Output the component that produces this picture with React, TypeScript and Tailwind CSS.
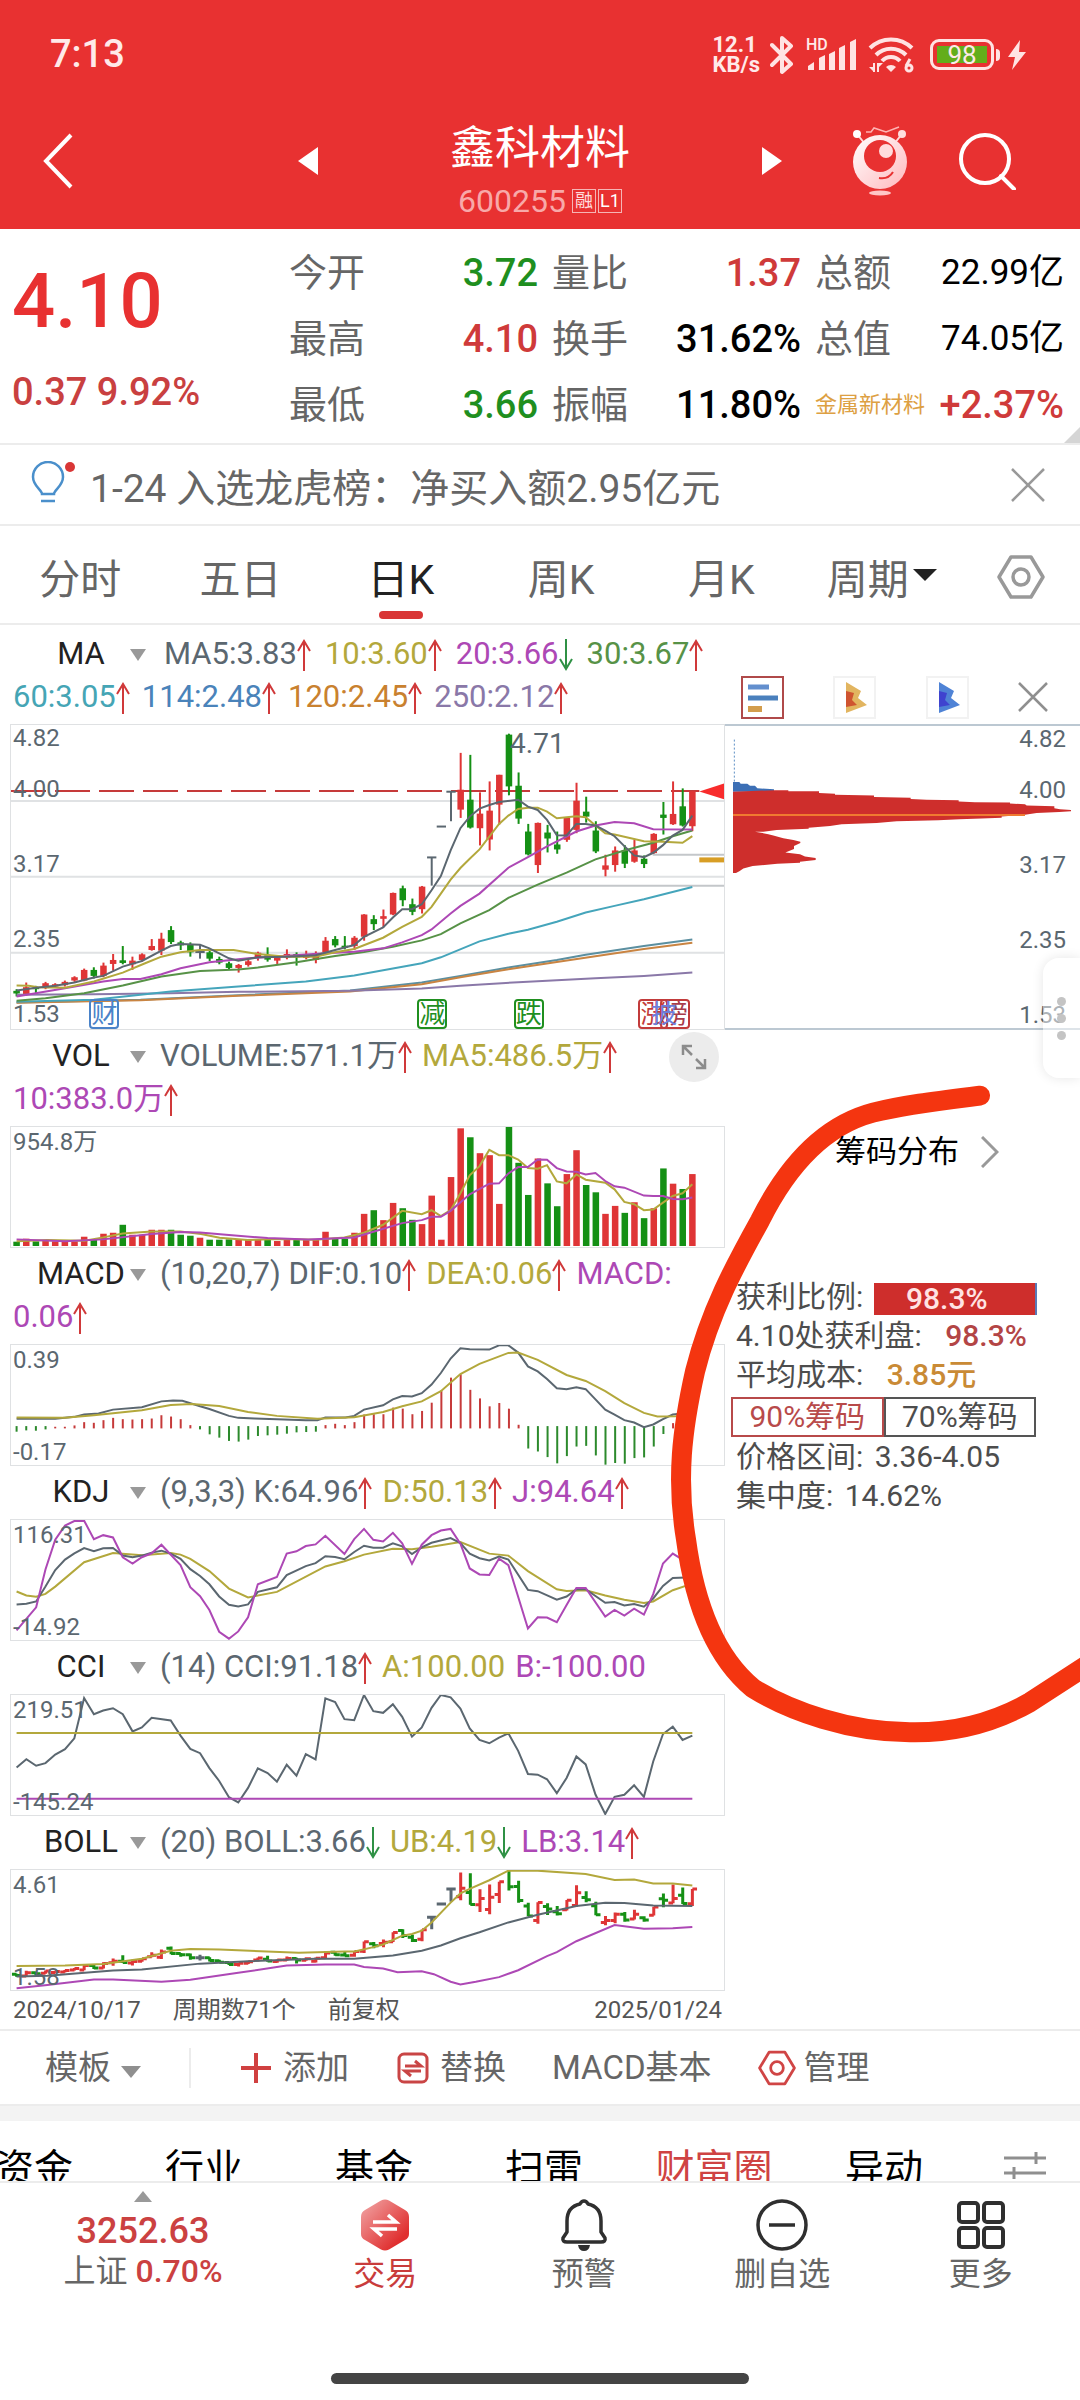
import { useState } from 'react'
import type { ReactNode } from 'react'

const RED = '#df3536'
const GREEN = '#159015'
const GRAY = '#5b6770'
const YELLOW = '#b3a83c'
const PURPLE = '#ad48b5'

// x of the n-th day on the chart grid, 71 days in all
const dayX = (i: number) => 34 + i * 20.73

// [kind, body top, body bottom, high, low]
type Candle = [string, number, number, number, number]

const candles: Candle[] = [
  ['g', 873, 881, 868, 890], ['r', 862, 884, 848, 888], ['g', 862, 868, 858, 880], ['r', 850, 865, 846, 868],
  ['r', 853, 860, 850, 863], ['r', 846, 856, 842, 860], ['r', 832, 842, 829, 846], ['r', 810, 842, 806, 844],
  ['g', 810, 828, 802, 836], ['r', 797, 828, 788, 832], ['r', 780, 792, 762, 812], ['g', 781, 789, 738, 793],
  ['r', 782, 793, 770, 810], ['r', 763, 780, 760, 785], ['r', 738, 750, 717, 752], ['r', 716, 752, 698, 765],
  ['g', 690, 726, 678, 732], ['g', 727, 736, 722, 750], ['g', 735, 757, 727, 770], ['n', 756, 756, 735, 776],
  ['g', 757, 776, 752, 783], ['g', 777, 788, 770, 793], ['g', 790, 804, 785, 808], ['r', 795, 804, 792, 818],
  ['r', 784, 795, 780, 800], ['r', 758, 772, 755, 782], ['g', 766, 779, 742, 785], ['r', 772, 782, 768, 792],
  ['r', 762, 772, 748, 778], ['g', 762, 772, 757, 797], ['r', 764, 774, 752, 778], ['r', 760, 780, 754, 790],
  ['r', 722, 756, 711, 762], ['g', 717, 736, 708, 742], ['g', 737, 743, 708, 748], ['r', 713, 738, 708, 750],
  ['r', 643, 710, 642, 722], ['g', 657, 672, 645, 690], ['r', 648, 656, 628, 682], ['r', 578, 643, 577, 645],
  ['g', 564, 600, 556, 618], ['g', 612, 635, 595, 645], ['r', 559, 627, 557, 640], ['n', 471, 471, 471, 556],
  ['n', 378, 378, 378, 378], ['n', 273, 273, 273, 362], ['r', 267, 327, 156, 352], ['g', 297, 381, 162, 384],
  ['r', 339, 383, 275, 435], ['r', 330, 417, 242, 450], ['r', 222, 312, 222, 372], ['g', 101, 257, 98, 284],
  ['g', 255, 354, 215, 370], ['g', 393, 462, 370, 465], ['r', 367, 494, 366, 518], ['g', 396, 414, 373, 456],
  ['g', 432, 447, 393, 460], ['r', 352, 418, 350, 424], ['r', 300, 388, 246, 398], ['g', 333, 348, 288, 366],
  ['g', 390, 453, 362, 458], ['r', 495, 508, 463, 528], ['r', 450, 494, 438, 514], ['g', 450, 490, 434, 503],
  ['r', 450, 484, 418, 487], ['g', 475, 491, 465, 503], ['r', 400, 458, 398, 460], ['g', 342, 352, 304, 402],
  ['r', 340, 371, 242, 373], ['g', 317, 375, 263, 378], ['r', 272, 377, 272, 392],
]

const volumeTops = [
  633, 624, 632, 630, 632, 632, 632, 618, 627, 609, 606, 582, 612, 612, 597, 597, 597, 612, 615, 621, 627, 627, 626,
  627, 628, 627, 625, 631, 627, 628, 628, 628, 603, 622, 624, 606, 549, 538, 568, 516, 532, 567, 580, 494, 627, 438,
  291, 318, 366, 372, 519, 287, 395, 492, 382, 457, 526, 429, 357, 462, 484, 549, 525, 546, 514, 562, 532, 412, 458,
  474, 429,
]

const macdEnds = [
  360, 356, 357, 353, 345, 345, 341, 331, 333, 325, 318, 322, 323, 322, 320, 310, 314, 322, 340, 353, 368, 378, 388,
  390, 384, 373, 371, 369, 366, 362, 361, 360, 340, 336, 340, 331, 308, 307, 307, 287, 290, 307, 297, 272, 235, 196,
  186, 233, 259, 283, 273, 290, 339, 411, 420, 437, 456, 434, 405, 403, 432, 460, 455, 457, 440, 438, 405, 367, 334,
  334, 325,
]

const priceLines = [
  { color: '#5b8fa0', points: '34,908 300,900 510,886 750,872 904,848 987,828 1090,803 1194,780 1256,764 1381,738 1485,718' },
  { color: '#c98442', points: '34,909 300,901 510,888 750,875 904,853 987,832 1090,808 1194,786 1381,747 1485,728' },
  { color: '#8a78a8', points: '34,885 200,883 365,880 510,876 750,873 904,866 987,858 1111,847 1277,835 1381,828 1485,818' },
  { color: '#45a5bb', points: '34,906 200,900 365,875 510,860 655,845 759,827 842,806 904,790 945,772 1028,724 1090,701 1132,689 1194,665 1256,637 1318,617 1381,597 1485,560' },
  { color: '#579247', points: '34,903 96,895 179,880 262,857 345,830 428,813 510,809 552,803 635,787 718,768 780,756 842,740 904,721 945,702 987,670 1049,630 1090,593 1153,553 1215,517 1277,477 1339,450 1401,427 1443,407 1485,390' },
  { color: PURPLE, points: '34,890 138,865 220,845 262,837 300,837 345,823 386,805 448,787 531,775 614,767 697,760 759,755 821,745 862,727 904,705 925,688 966,640 987,617 1028,580 1090,502 1132,470 1173,438 1236,393 1277,375 1318,364 1360,368 1401,386 1485,387' },
  { color: YELLOW, points: '34,857 60,858 80,862 138,864 200,845 262,818 310,790 345,770 386,757 428,750 500,750 552,762 614,770 676,770 718,757 759,747 821,713 862,680 904,650 925,620 945,580 966,538 987,503 1007,475 1028,447 1070,370 1090,345 1111,325 1132,321 1153,321 1173,333 1194,353 1236,347 1256,350 1277,375 1298,398 1318,402 1381,422 1422,424 1464,427 1485,407' },
  { color: GRAY, points: '34,872 76,864 117,858 158,848 200,833 220,828 262,800 303,783 345,752 365,738 386,732 428,734 448,745 490,775 510,782 552,772 614,770 676,766 718,750 759,735 780,710 821,682 842,652 862,627 883,627 904,612 925,570 945,527 966,450 987,383 1007,348 1028,324 1049,313 1070,304 1111,297 1132,318 1153,328 1173,358 1194,404 1215,405 1236,370 1256,370 1277,375 1298,390 1318,407 1339,437 1360,465 1381,470 1401,457 1422,434 1443,405 1464,388 1485,345' },
]

const volumeLines = [
  { color: YELLOW, points: '34,632 100,628 180,630 220,620 262,608 324,602 386,602 430,610 470,621 530,628 600,625 676,627 738,620 780,606 821,582 862,540 904,550 925,538 945,556 966,538 987,487 1007,433 1028,405 1049,356 1070,372 1090,372 1111,385 1132,411 1153,413 1173,402 1194,451 1215,457 1236,430 1256,446 1298,455 1318,475 1339,513 1360,520 1381,538 1401,536 1422,515 1443,495 1464,487 1485,460' },
  { color: PURPLE, points: '34,626 138,632 220,626 324,610 386,604 428,605 490,613 573,622 660,626 759,620 800,603 862,577 904,568 925,558 945,558 966,540 1007,490 1049,458 1070,457 1090,427 1111,408 1132,408 1153,385 1173,386 1194,411 1215,421 1236,422 1256,430 1277,426 1298,450 1318,466 1339,470 1381,494 1401,495 1422,495 1443,504 1464,505 1485,500' },
]

const macdLines = [
  { color: GRAY, points: '34,321 117,321 158,315 179,308 210,305 241,293 303,286 345,268 370,265 390,266 428,283 448,291 490,312 510,318 545,320 593,322 655,325 680,325 697,317 740,317 759,312 780,293 821,280 842,262 862,252 883,253 904,243 925,217 945,182 966,138 987,107 1007,110 1049,111 1070,98 1090,98 1111,120 1132,162 1153,177 1173,200 1194,228 1215,231 1236,225 1256,231 1277,262 1298,293 1318,308 1339,325 1360,332 1381,346 1401,338 1422,322 1443,308 1464,305 1485,270' },
  { color: YELLOW, points: '34,317 138,318 200,310 303,295 365,279 410,276 469,282 531,300 593,312 680,321 759,316 821,300 862,283 904,268 945,237 987,185 1028,154 1090,121 1111,120 1153,142 1215,188 1256,206 1298,237 1339,273 1381,303 1410,314 1450,313 1485,300' },
]

const kdjLines = [
  { color: YELLOW, points: '34,842 55,854 76,858 96,849 117,827 179,753 241,725 303,732 365,725 386,730 407,743 448,780 490,833 531,860 593,843 697,766 738,750 780,730 842,712 883,714 925,706 987,692 1049,727 1090,733 1132,780 1194,835 1215,840 1256,838 1298,854 1339,867 1381,877 1401,872 1443,838 1485,818' },
  { color: GRAY, points: '34,881 55,879 76,872 96,827 117,777 138,745 158,726 179,710 200,720 220,711 241,710 262,733 283,738 303,733 324,724 345,718 365,727 386,743 407,774 428,795 448,820 469,857 490,882 510,887 531,881 552,843 593,829 614,792 655,765 676,756 697,735 718,737 738,744 759,722 780,703 800,709 821,709 842,696 862,705 883,728 904,708 925,694 966,680 987,695 1007,727 1028,741 1049,748 1070,736 1090,745 1132,837 1153,841 1194,867 1215,857 1236,835 1256,835 1298,876 1318,874 1339,884 1360,880 1381,888 1401,863 1422,825 1443,801 1485,799' },
  { color: PURPLE, points: '34,960 76,890 96,775 117,685 138,642 158,628 179,627 200,683 220,671 241,678 262,738 283,757 303,738 324,726 345,700 386,762 407,829 428,856 448,898 469,964 490,985 510,963 531,920 552,820 593,798 614,727 635,720 655,704 676,699 697,673 738,728 759,683 780,652 800,685 821,690 842,664 862,696 883,758 904,700 925,671 945,657 966,652 987,697 1007,772 1028,790 1049,792 1070,742 1090,762 1132,954 1153,920 1173,921 1194,935 1215,883 1236,831 1256,831 1298,918 1318,898 1339,915 1360,894 1381,912 1401,850 1422,757 1443,727 1464,745 1485,760' },
]

const cciLines = [
  { color: GRAY, points: '34,413 55,388 76,408 96,400 117,374 138,358 158,325 179,203 200,252 220,241 241,234 262,252 283,304 303,292 324,263 365,271 386,317 407,357 428,370 448,415 469,454 490,503 510,519 531,475 552,416 573,430 593,456 614,405 635,438 655,373 676,389 697,204 718,215 738,267 759,270 780,194 800,243 821,248 842,222 862,260 883,320 904,292 925,233 945,194 966,201 987,235 1007,295 1028,330 1049,340 1070,323 1090,310 1111,363 1132,433 1153,435 1173,449 1194,491 1215,445 1236,380 1256,404 1277,495 1298,554 1318,502 1339,496 1360,467 1381,502 1401,395 1422,312 1443,290 1464,330 1485,317' },
  { color: YELLOW, points: '34,309 1485,309' },
  { color: PURPLE, points: '34,508 1485,508' },
]

const bollLines = [
  { color: YELLOW, points: '34,1012 138,1011 220,1006 303,990 365,966 407,961 470,962 640,972 738,968 760,968 800,955 821,947 862,920 883,915 904,905 925,880 966,820 987,792 1007,778 1049,752 1090,723 1153,723 1256,733 1318,751 1360,750 1401,762 1443,762 1485,768' },
  { color: GRAY, points: '34,1044 100,1042 241,1026 303,1023 428,1005 531,998 676,990 759,990 842,980 904,966 945,950 987,928 1028,910 1090,880 1153,857 1236,830 1298,820 1339,821 1401,829 1485,830' },
  { color: PURPLE, points: '34,1080 100,1070 200,1053 241,1053 345,1060 407,1054 510,1033 614,1011 697,1008 759,1008 780,1015 821,1020 852,1031 904,1028 930,1037 966,1060 987,1068 1020,1060 1070,1046 1111,1025 1173,982 1194,970 1236,937 1318,888 1381,899 1443,898 1485,894' },
]

function kindColor(kind: string) {
  if (kind === 'r') return RED
  if (kind === 'g') return GREEN
  return GRAY
}

function Triangle({ className, up }: { className: string; up?: boolean }) {
  return (
    <svg viewBox="0 0 20 12" preserveAspectRatio="none" className={className} aria-hidden="true">
      <path d={up ? 'M10 0 20 12H0Z' : 'M0 0h20L10 12Z'} fill="currentColor" />
    </svg>
  )
}

function Arrow({ dir }: { dir: 'up' | 'down' }) {
  return (
    <svg viewBox="0 0 14 32" className={dir === 'up' ? 'w-[14px] h-8' : 'w-[14px] h-8 rotate-180'} aria-hidden="true">
      <path d="M7 32V2M1 12 7 2l6 10" fill="none" stroke={dir === 'up' ? '#d0393a' : '#2f9145'} strokeWidth="2" />
    </svg>
  )
}

function HexIcon({ className }: { className: string }) {
  return (
    <svg viewBox="0 0 48 44" className={className} fill="none" stroke="currentColor" strokeWidth="3.500" aria-hidden="true">
      <path d="M14 2h20l12 20-12 20H14L2 22Z" strokeLinejoin="round" />
      <circle cx="24" cy="22" r="8" />
    </svg>
  )
}

function Lines({ lines }: { lines: { color: string; points: string }[] }) {
  return (
    <>
      {lines.map((line, i) => (
        <polyline
          key={i}
          points={line.points}
          fill="none"
          stroke={line.color}
          strokeWidth="2"
          vectorEffect="non-scaling-stroke"
        />
      ))}
    </>
  )
}

function StatusBar() {
  return (
    <div className="flex h-[109px] items-center justify-between pl-[50px] pr-[54px]">
      <span className="text-[38px] font-medium">7:13</span>
      <div className="flex items-center">
        <div className="text-[22px] leading-[20px] font-bold">
          <div>12.1</div>
          <div>KB/s</div>
        </div>
        <svg viewBox="0 0 24 40" className="ml-[10px] w-6 h-10" fill="none" stroke="#ffe3e3" strokeWidth="4" aria-label="蓝牙">
          <path d="M2 10 21 29 12 37V3L21 11 2 30" strokeLinejoin="round" strokeLinecap="round" />
        </svg>
        <div className="relative ml-3 h-8 w-[50px]">
          <span className="absolute left-0 -top-1 text-base leading-5 font-medium">HD</span>
          <svg viewBox="0 0 50 32" className="h-8 w-[50px]" fill="#ffe3e3" aria-label="信号">
            <path d="M2 31v-4l6-4v8zM13 31V19l6-3v15zM23 31V15l6-3v19zM33 31V9l6-3v25zM44 31V3l6-3v31z" />
          </svg>
        </div>
        <svg viewBox="0 0 48 36" className="ml-3 h-9 w-12" aria-label="无线网络">
          <g fill="none" stroke="#ffe3e3" strokeWidth="4">
            <path d="M2 11a30 30 0 0 1 42 0M8 18a21 21 0 0 1 30 0M14 24a12 12 0 0 1 18 0" />
            <path d="M6 35v-9M10 26v9" strokeWidth="2" />
          </g>
          <path d="M18 30a7 7 0 0 1 10 0l-5 5z" fill="#ffe3e3" />
          <path d="M1 30h5v5zM10 26h5l-5 5z" fill="#ffe3e3" />
          <path d="M42 22 38 29" stroke="#ffe3e3" strokeWidth="3" />
          <circle cx="41" cy="31" r="3" fill="none" stroke="#ffe3e3" strokeWidth="3" />
        </svg>
        <div className="ml-[14px] flex h-[31px] w-16 items-center rounded-[9px] border-[3px] border-[#ffe3e3] p-1">
          <div className="flex h-full w-full items-center justify-center bg-[#63ad1b] text-[26px] leading-none">98</div>
        </div>
        <div className="ml-0.5 h-3 w-1 rounded-r bg-[#ffe3e3]" />
        <svg viewBox="0 0 18 30" className="ml-2 h-[30px] w-[18px]" fill="#ffe3e3" aria-label="充电中">
          <path d="M12 0 0 17h7l-3 13L18 12h-7z" />
        </svg>
      </div>
    </div>
  )
}

function Header() {
  return (
    <header className="bg-[#e83131] text-[#ffe9e9]">
      <StatusBar />
      <div className="grid h-[120px] grid-cols-[1fr_484px_1fr] items-center">
        <button className="pb-[16px] pl-[43px] text-left" aria-label="返回">
          <svg viewBox="0 0 30 56" className="h-14 w-[30px]" fill="none" stroke="#fff" strokeWidth="4">
            <path d="M28 2 3 28l25 26" />
          </svg>
        </button>
        <div className="flex items-center justify-between">
          <button className="pb-[16px]" aria-label="上一只">
            <svg viewBox="0 0 20 28" className="h-7 w-5" fill="#fff">
              <path d="M20 0v28L0 14z" />
            </svg>
          </button>
          <div className="pt-1 text-center">
            <h1 className="text-[45px] leading-[60px] text-white">鑫科材料</h1>
            <div className="flex h-11 items-center justify-center gap-0.5 text-[#f8a9a9]">
              <span className="mr-1 text-[32px]">600255</span>
              <span className="flex size-6 items-center justify-center border border-[#f5b5b5] text-[18px] leading-none text-[#ffdcdc]">融</span>
              <span className="flex size-6 items-center justify-center border border-[#f5b5b5] text-[18px] leading-none text-white">L1</span>
            </div>
          </div>
          <button className="pb-[16px]" aria-label="下一只">
            <svg viewBox="0 0 20 28" className="h-7 w-5" fill="#fff">
              <path d="M0 0v28l20-14z" />
            </svg>
          </button>
        </div>
        <div className="flex items-center justify-end gap-[50px] pr-[64px] pb-[16px]">
          <button aria-label="智能助手">
            <svg viewBox="0 0 56 70" className="h-[70px] w-14">
              <defs>
                <linearGradient id="robot" x1="0" y1="0" x2="1" y2="1">
                  <stop offset="0" stopColor="#fff" />
                  <stop offset="1" stopColor="#ffb9bd" />
                </linearGradient>
              </defs>
              <path d="M5 8l8 10M50 8l-8 10" stroke="#ffd9d9" strokeWidth="2" />
              <circle cx="5" cy="8" r="4" fill="#fff" />
              <circle cx="50" cy="8" r="4" fill="#ffdede" />
              <path d="M14 6h5l3-4 12 4 13-5" fill="none" stroke="#ffb3b3" strokeWidth="1.5" />
              <circle cx="28" cy="36" r="27" fill="url(#robot)" />
              <circle cx="28" cy="30" r="16" fill="#e83131" />
              <circle cx="34" cy="25" r="7" fill="#ffdcdc" />
              <path d="M27 52c6 1 11-1 14-6" fill="none" stroke="#e83131" strokeWidth="2" />
              <ellipse cx="28" cy="67" rx="11" ry="2.5" fill="#ffc6c6" />
            </svg>
          </button>
          <button aria-label="搜索">
            <svg viewBox="0 0 58 58" className="size-[58px]" fill="none" stroke="#fff" strokeWidth="4">
              <circle cx="27" cy="27" r="24" />
              <path d="m43 44 13 13" strokeLinecap="round" />
            </svg>
          </button>
        </div>
      </div>
    </header>
  )
}

const stats = [
  { label: '今开', value: '3.72', color: 'text-[#1f8f1f]' },
  { label: '量比', value: '1.37', color: 'text-[#cf3a3a]' },
  { label: '总额', value: '22.99亿', color: 'text-black' },
  { label: '最高', value: '4.10', color: 'text-[#cf3a3a]' },
  { label: '换手', value: '31.62%', color: 'text-black' },
  { label: '总值', value: '74.05亿', color: 'text-black' },
  { label: '最低', value: '3.66', color: 'text-[#1f8f1f]' },
  { label: '振幅', value: '11.80%', color: 'text-black' },
]

function Quote() {
  return (
    <section className="relative flex border-b-2 border-[#ececec] pt-[11px] pb-[5px] pr-[16px] pl-3">
      <div className="w-[277px] shrink-0">
        <div className="text-[76px] leading-[122px] font-medium text-[#e83131]">4.10</div>
        <div className="text-[38px] leading-[60px] font-medium text-[#c94040]">0.37 9.92%</div>
      </div>
      <dl className="grid flex-1 grid-cols-3 gap-x-[14px] text-[38px] leading-[66px]">
        {stats.map((s) => (
          <div key={s.label} className="flex justify-between">
            <dt className="text-[#666]">{s.label}</dt>
            <dd className={s.value.endsWith('亿') ? 'text-[35px] text-black' : `${s.color} font-medium`}>{s.value}</dd>
          </div>
        ))}
        <div className="flex justify-between">
          <dt className="text-[22px] text-[#dda042]">金属新材料</dt>
          <dd className="font-medium text-[#cf3a3a]">+2.37%</dd>
        </div>
      </dl>
      <div className="absolute right-0 bottom-0 size-4 bg-[#d5d5d5] [clip-path:polygon(100%_0,100%_100%,0_100%)]" />
    </section>
  )
}

function Notice() {
  return (
    <section className="flex h-[81px] items-center border-b-2 border-[#ececec] pr-[35px] pl-[30px] text-[#666]">
      <svg viewBox="0 0 46 44" className="mb-1 h-11 w-[46px]" fill="none" stroke="#4a8fcb" strokeWidth="2.5" aria-hidden="true">
        <path d="M12 33c0-4-9-8-9-17a15 15 0 0 1 30 0c0 9-9 13-9 17zM11 40h14" />
        <circle cx="40" cy="6" r="5" fill="#d93636" stroke="none" />
      </svg>
      <a href="#notice" className="ml-[14px] flex-1 pt-2 text-[39px] leading-[60px]">1-24 入选龙虎榜：净买入额2.95亿元</a>
      <button aria-label="关闭提示">
        <svg viewBox="0 0 34 34" className="size-[34px]" stroke="#999" strokeWidth="2.5">
          <path d="m1 1 32 32M33 1 1 33" />
        </svg>
      </button>
    </section>
  )
}

function PeriodTabs() {
  const [active, setActive] = useState('日K')
  return (
    <nav className="flex h-[99px] items-stretch border-b-2 border-[#ececec] text-[41px] text-[#666]">
      {['分时', '五日', '日K', '周K', '月K'].map((t) => (
        <button
          key={t}
          onClick={() => setActive(t)}
          className={active === t ? 'relative flex-1 pt-3 text-[#222]' : 'relative flex-1 pt-3'}
        >
          {t}
          {active === t && <span className="absolute bottom-1 left-1/2 h-2 w-11 -translate-x-1/2 rounded-full bg-[#d93636]" />}
        </button>
      ))}
      <button className="flex flex-1 items-center justify-center gap-1 pt-3" aria-haspopup="menu">
        周期
        <Triangle className="mb-3 h-3 w-6 text-[#222]" />
      </button>
      <button className="flex w-[118px] items-center justify-center pt-1 text-[#999]" aria-label="设置">
        <HexIcon className="h-11 w-12" />
      </button>
    </nav>
  )
}

type Item = { text: string; color: string; dir?: 'up' | 'down' }

function Items({ items }: { items: Item[] }) {
  return (
    <>
      {items.map((item) => (
        <span key={item.text} className={`flex shrink-0 items-center ${item.color}`}>
          {item.text}
          {item.dir && <Arrow dir={item.dir} />}
        </span>
      ))}
    </>
  )
}

function Legend({ name, items, more, first }: { name: string; items: Item[]; more?: Item[]; first?: boolean }) {
  return (
    <div className={first ? 'pt-2 pb-[5px] text-[31px]' : 'py-[5px] text-[31px]'}>
      <div className={first ? 'flex h-[43px] items-center gap-[14px] whitespace-nowrap' : 'flex h-[43px] items-center gap-[10px] whitespace-nowrap'}>
        <label className="mr-1 ml-[22px] flex items-center">
          <select aria-label="指标" className="w-[98px] appearance-none bg-transparent text-center text-[#222] [text-align-last:center]">
            <option>{name}</option>
          </select>
          <Triangle className="h-3 w-4 text-[#999]" />
        </label>
        <Items items={items} />
      </div>
      {more && (
        <div className="flex h-[43px] items-center gap-3 pl-[3px]">
          <Items items={more} />
        </div>
      )}
    </div>
  )
}

function Plot({ view, className, children, labels }: { view: string; className: string; children: ReactNode; labels?: ReactNode }) {
  return (
    <div className={`relative border border-[#dfe1e3] text-2xl text-[#5b6770] ${className}`}>
      <svg viewBox={view} preserveAspectRatio="none" className="h-full w-full">
        {children}
      </svg>
      {labels}
    </div>
  )
}

function Range({ max, min }: { max: string; min?: string }) {
  return (
    <div className="absolute inset-y-0 left-0.5 flex flex-col justify-between pt-0.5 leading-[26px]">
      <span>{max}</span>
      <span>{min}</span>
    </div>
  )
}

function PriceAxis({ className }: { className: string }) {
  return (
    <ul className={`absolute top-0 leading-[26px] ${className}`}>
      <li className="h-[51px]">4.82</li>
      <li className="h-[75px]">4.00</li>
      <li className="h-[75px]">3.17</li>
      <li className="h-[75px]">2.35</li>
      <li>1.53</li>
    </ul>
  )
}

function Candles() {
  return (
    <>
      {candles.map(([kind, top, bottom, high, low], i) => {
        const x = dayX(i)
        const color = kindColor(kind)
        return (
          <g key={i}>
            <line x1={x} x2={x} y1={high} y2={low} stroke={color} strokeWidth="2" vectorEffect="non-scaling-stroke" />
            {kind === 'n' ? (
              <line x1={x - 10} x2={x + 10} y1={top} y2={top} stroke={color} strokeWidth="2" vectorEffect="non-scaling-stroke" />
            ) : (
              <rect x={x - 7} y={top} width="14" height={bottom - top} fill={color} />
            )}
          </g>
        )
      })}
    </>
  )
}

// open/high/low/close bars, the price grid compressed onto the BOLL range
function OhlcBars() {
  const y = (v: number) => 692 + (v - 72) * 0.4314
  return (
    <>
      {candles.map(([kind, top, bottom, high, low], i) => {
        const x = dayX(i)
        const open = y(kind === 'r' ? bottom : top)
        const close = y(kind === 'r' ? top : bottom)
        return (
          <path
            key={i}
            d={`M${x} ${y(high)}V${y(low)}M${x - 10} ${open}H${x}M${x} ${close}H${x + 10}`}
            stroke={kindColor(kind)}
            strokeWidth="3"
            vectorEffect="non-scaling-stroke"
          />
        )
      })}
    </>
  )
}

function EventTag({ text, className }: { text: string; className: string }) {
  return (
    <span className={`absolute bottom-0 flex size-[30px] items-center justify-center rounded border-2 text-[26px] leading-none ${className}`}>
      {text}
    </span>
  )
}

const gray = 'text-[#5b6770]'
const yellow = 'text-[#b3a83c]'
const purple = 'text-[#ad48b5]'

function ChartColumn() {
  return (
    <div className="min-w-0 pl-[10px]">
      <Legend
        first
        name="MA"
        items={[
          { text: 'MA5:3.83', color: gray, dir: 'up' },
          { text: '10:3.60', color: yellow, dir: 'up' },
          { text: '20:3.66', color: purple, dir: 'down' },
          { text: '30:3.67', color: 'text-[#579247]', dir: 'up' },
        ]}
        more={[
          { text: '60:3.05', color: 'text-[#45a5b5]', dir: 'up' },
          { text: '114:2.48', color: 'text-[#4a83ba]', dir: 'up' },
          { text: '120:2.45', color: 'text-[#c9812f]', dir: 'up' },
          { text: '250:2.12', color: 'text-[#8a78a8]', dir: 'up' },
        ]}
      />
      <Plot
        view="22 72 1531 916"
        className="h-[306px]"
        labels={
          <>
            <PriceAxis className="left-0.5" />
            <span className="absolute top-0 left-[70%] text-[28px]">4.71</span>
            <EventTag text="财" className="left-[11%] border-[#4a83c9] text-[#4a83c9]" />
            <EventTag text="减" className="left-[57%] border-[#1f8f1f] text-[#1f8f1f]" />
            <EventTag text="跌" className="left-[70.5%] border-[#1f8f1f] text-[#1f8f1f]" />
            <EventTag text="涨" className="left-[88%] border-[#c23b3b] text-[#c23b3b]" />
            <EventTag text="榜" className="left-[91%] border-[#c23b3b] text-[#a83b4b]" />
            <EventTag text="披" className="left-[89.5%] border-transparent text-[#6b7fdc]" />
          </>
        }
      >
        <path d="M22 301H1553M22 529H1553M22 758H1553" stroke="#e0e2e4" strokeWidth="2" vectorEffect="non-scaling-stroke" />
        <path d="M935 556H1553M1400 463H1553" stroke="#c4c7ca" strokeWidth="2" vectorEffect="non-scaling-stroke" />
        <path d="M22 271H1500" stroke="#c63a3a" strokeWidth="2" strokeDasharray="35 9" vectorEffect="non-scaling-stroke" />
        <Candles />
        <Lines lines={priceLines} />
        <path d="M1500 272 1553 248V296Z" fill="#f82c2c" />
        <rect x="1500" y="471" width="53" height="15" fill="#d89e25" />
      </Plot>

      <div className="relative">
        <Legend
          name="VOL"
          items={[
            { text: 'VOLUME:571.1万', color: gray, dir: 'up' },
            { text: 'MA5:486.5万', color: yellow, dir: 'up' },
          ]}
          more={[{ text: '10:383.0万', color: purple, dir: 'up' }]}
        />
        <button className="absolute top-0.5 right-[6px] flex size-[50px] items-center justify-center rounded-full bg-[#ececec]" aria-label="全屏">
          <svg viewBox="0 0 26 26" className="size-[26px]" fill="none" stroke="#8c8c8c" strokeWidth="2.5">
            <path d="M2 11V2h9M2 2l9 9M24 15v9h-9M24 24l-9-9" />
          </svg>
        </button>
      </div>
      <Plot view="22 287 1531 362" className="h-[122px]" labels={<Range max="954.8万" />}>
        {volumeTops.map((top, i) => {
          const kind = candles[i][0]
          return <rect key={i} x={dayX(i) - 7} y={top} width="14" height={646 - top} fill={kind === 'g' ? GREEN : RED} />
        })}
        <Lines lines={volumeLines} />
      </Plot>

      <Legend
        name="MACD"
        items={[
          { text: '(10,20,7) DIF:0.10', color: gray, dir: 'up' },
          { text: 'DEA:0.06', color: yellow, dir: 'up' },
          { text: 'MACD:', color: purple },
        ]}
        more={[{ text: '0.06', color: purple, dir: 'up' }]}
      />
      <Plot view="22 97 1531 364" className="h-[122px]" labels={<Range max="0.39" min="-0.17" />}>
        {macdEnds.map((end, i) => (
          <line
            key={i}
            x1={dayX(i)}
            x2={dayX(i)}
            y1={end < 346 ? 350 : 343}
            y2={end}
            stroke={end < 346 ? '#c63a3a' : '#2c8a2c'}
            strokeWidth="2"
            vectorEffect="non-scaling-stroke"
          />
        ))}
        <Lines lines={macdLines} />
      </Plot>

      <Legend
        name="KDJ"
        items={[
          { text: '(9,3,3) K:64.96', color: gray, dir: 'up' },
          { text: 'D:50.13', color: yellow, dir: 'up' },
          { text: 'J:94.64', color: purple, dir: 'up' },
        ]}
      />
      <Plot view="22 625 1531 364" className="h-[122px]" labels={<Range max="116.31" min="-14.92" />}>
        <Lines lines={kdjLines} />
      </Plot>

      <Legend
        name="CCI"
        items={[
          { text: '(14) CCI:91.18', color: gray, dir: 'up' },
          { text: 'A:100.00', color: yellow },
          { text: 'B:-100.00', color: purple },
        ]}
      />
      <Plot view="22 194 1531 363" className="h-[122px]" labels={<Range max="219.51" min="-145.24" />}>
        <Lines lines={cciLines} />
      </Plot>

      <Legend
        name="BOLL"
        items={[
          { text: '(20) BOLL:3.66', color: gray, dir: 'down' },
          { text: 'UB:4.19', color: yellow, dir: 'down' },
          { text: 'LB:3.14', color: purple, dir: 'up' },
        ]}
      />
      <Plot view="22 721 1531 364" className="h-[122px]" labels={<Range max="4.61" min="1.58" />}>
        <OhlcBars />
        <Lines lines={bollLines} />
      </Plot>

      <div className="flex h-[38px] items-center gap-8 px-[3px] text-2xl text-[#555]">
        <span>2024/10/17</span>
        <span>周期数71个</span>
        <span>前复权</span>
        <span className="ml-auto">2025/01/24</span>
      </div>
    </div>
  )
}

function ChipColumn() {
  const [share, setShare] = useState(90)
  return (
    <div className="relative text-[30px] text-[#4d4d4d]">
      <div className="flex h-[99px] items-start justify-between pt-[51px] pr-8 pl-4">
        <button className="size-[43px] border-2 border-[#b04a4a]" aria-label="全部筹码">
          <svg viewBox="0 0 39 39">
            <path d="M5 9h21" stroke="#638fce" strokeWidth="5" />
            <path d="M5 20h30" stroke="#4a80bd" strokeWidth="5" />
            <path d="M5 31h14" stroke="#d39d4c" strokeWidth="6" />
          </svg>
        </button>
        <button className="size-[43px] border-2 border-[#f2f2f2]" aria-label="近期筹码">
          <svg viewBox="0 0 39 39">
            <path d="M11 4 26 13l-3 7 9 7-21 8z" fill="#e2b560" />
            <path d="M11 13l8 2-2 7 5 5-11 2z" fill="#cf5430" />
          </svg>
        </button>
        <button className="size-[43px] border-2 border-[#f2f2f2]" aria-label="远期筹码">
          <svg viewBox="0 0 39 39">
            <path d="M11 4 26 13l-3 7 9 7-21 8z" fill="#4f83d6" />
            <path d="M11 13l8 2-2 7 5 5-11 2z" fill="#3f43cf" />
          </svg>
        </button>
        <button className="pt-[6px]" aria-label="关闭筹码分布">
          <svg viewBox="0 0 30 30" className="size-[30px]" stroke="#8f8f8f" strokeWidth="2.5">
            <path d="m1 1 28 28M29 1 1 29" />
          </svg>
        </button>
      </div>

      <div className="relative h-[306px] border-y-2 border-[#bcc8d2] text-2xl text-[#5b6770]">
        <svg viewBox="75 185 1065 888" preserveAspectRatio="none" className="h-full w-full">
          <path d="M103 225V350" stroke="#5d8fc4" strokeWidth="1" strokeDasharray="2 2" vectorEffect="non-scaling-stroke" />
          <path d="M99 350H118L122 355H142L150 361H165L172 368L222 371V378H99Z" fill="#3c6fb5" />
          <path
            d="M99 378 155 376 225 374H265V377H357V382L405 384V387L522 389V394L632 396V400L680 402 776 403V407L825 409 930 410V413L975 415 980 419 1063 421V427L1080 430 1113 432V436L1078 438 1010 441 975 446 905 451V455L845 457 778 459 715 462 590 465 530 470 425 474 390 479 326 484V487L230 491 190 496H165L205 503 220 507 250 515 280 520 301 525V529L282 538V547L256 557 300 562 315 569 347 573V579L300 584V587L232 590 158 597 130 604 118 612 108 617H99Z"
            fill="#ce2e2c"
          />
          <path d="M99 447H975" stroke="#f07a30" strokeWidth="2" vectorEffect="non-scaling-stroke" />
        </svg>
        <PriceAxis className="right-[14px]" />
      </div>

      <div className="absolute top-[333px] right-0 flex h-[120px] w-[37px] flex-col items-center gap-2 rounded-l-2xl bg-white/50 pt-[39px] shadow-[0_0_12px_rgba(0,0,0,0.1)]">
        <span className="size-[9px] rounded-full bg-[#c4c4c4]" />
        <span className="size-[9px] rounded-full bg-[#c4c4c4]" />
        <span className="size-[9px] rounded-full bg-[#c4c4c4]" />
      </div>

      <button className="relative z-10 mt-[102px] ml-[110px] flex h-10 items-center gap-[22px] text-[31px] text-black">
        筹码分布
        <svg viewBox="0 0 18 32" className="h-8 w-[18px]" fill="none" stroke="#999" strokeWidth="3">
          <path d="m1 1 15 15L1 31" />
        </svg>
      </button>

      <div className="mt-[105px] pl-[11px] leading-[39px]">
        <div className="flex items-center">
          获利比例:
          <span className="mt-1 ml-[11px] flex h-8 w-[163px] items-center justify-center border-r-2 border-[#5a79b5] bg-[#ce2e2c] pr-4 font-medium text-[#ffe3e3]">
            98.3%
          </span>
        </div>
        <p>
          4.10处获利盘: <b className="ml-4 font-medium text-[#b34545]">98.3%</b>
        </p>
        <p>
          平均成本: <b className="ml-4 font-medium text-[#c98a35]">3.85元</b>
        </p>
        <div className="mt-[3px] -ml-[5px] grid h-10 w-[305px] grid-cols-2">
          {[90, 70].map((n) => (
            <button
              key={n}
              onClick={() => setShare(n)}
              className={
                share === n
                  ? 'border-2 border-[#b84a4a] leading-9 whitespace-nowrap text-[#b84a4a]'
                  : 'border-2 border-[#555] leading-9 whitespace-nowrap'
              }
            >
              {n}%筹码
            </button>
          ))}
        </div>
        <p>
          价格区间: <span className="ml-1">3.36-4.05</span>
        </p>
        <p>
          集中度: <span className="ml-1">14.62%</span>
        </p>
      </div>
    </div>
  )
}

function Toolbar() {
  return (
    <div className="flex h-[77px] items-center border-y-2 border-[#ececec] pl-[45px] text-[33px] text-[#666]">
      <button className="flex items-center gap-[10px]" aria-haspopup="menu">
        模板
        <Triangle className="mt-2 h-3 w-5 text-[#8f8f8f]" />
      </button>
      <span className="ml-12 h-10 w-0.5 bg-[#ececec]" />
      <button className="ml-[50px] flex items-center gap-3">
        <svg viewBox="0 0 30 30" className="size-[30px]" stroke="#d04040" strokeWidth="4" aria-hidden="true">
          <path d="M15 0v30M0 15h30" />
        </svg>
        添加
      </button>
      <button className="ml-12 flex items-center gap-[11px]">
        <svg viewBox="0 0 32 32" className="size-8" fill="none" stroke="#c94545" strokeWidth="3" aria-hidden="true">
          <rect x="2" y="2" width="28" height="28" rx="5" />
          <path d="M8 14h16l-6-5M24 19H8l6 5" />
        </svg>
        替换
      </button>
      <button className="ml-[46px]">MACD基本</button>
      <button className="ml-[46px] flex items-center gap-2">
        <HexIcon className="h-9 w-[38px] text-[#d04545]" />
        管理
      </button>
    </div>
  )
}

function SectionTabs() {
  const tab = 'w-[170px] shrink-0 text-center'
  return (
    <nav className="flex h-[62px] items-start overflow-hidden border-b-2 border-[#ececec] pt-5 text-[39px] leading-[56px] text-black">
      <a href="#funds" className="-ml-[51px] w-[170px] shrink-0 text-center">资金</a>
      <a href="#industry" className={tab}>行业</a>
      <a href="#fund" className={tab}>基金</a>
      <a href="#risk" className={tab}>扫雷</a>
      <a href="#circle" className="w-[170px] shrink-0 text-center text-[#cf4343]">财富圈</a>
      <a href="#moves" className={tab}>异动</a>
      <button className="flex flex-1 justify-center pt-[10px]" aria-label="筛选">
        <svg viewBox="0 0 42 28" className="h-7 w-[42px]" fill="none" stroke="#8f8f8f" strokeWidth="3">
          <path d="M0 7h42M32 1v12M0 22h42M10 16v12" />
        </svg>
      </button>
    </nav>
  )
}

function BottomNav() {
  return (
    <nav className="flex pt-2 text-[32px] leading-[42px] text-[#666]">
      <button className="flex w-[286px] shrink-0 flex-col items-center">
        <Triangle up className="h-[11px] w-[18px] text-[#999]" />
        <span className="mt-[10px] text-[36px] leading-[38px] font-medium text-[#cb4141]">3252.63</span>
        <span>
          上证 <b className="font-medium text-[#cb4141]">0.70%</b>
        </span>
      </button>
      <button className="flex flex-1 flex-col items-center gap-0.5 pt-2 text-[#c93c3c]">
        <svg viewBox="0 0 48 52" className="h-[52px] w-12" aria-hidden="true">
          <defs>
            <linearGradient id="trade" x1="0" y1="0" x2="1" y2="1">
              <stop offset="0.1" stopColor="#ef9a9a" />
              <stop offset="0.8" stopColor="#e02f2f" />
            </linearGradient>
          </defs>
          <path d="M20 1.500q4-2 8 0L44 11q4 2 4 7v17q0 4-4 6L28 50.500q-4 2-8 0L4 41q-4-2-4-6V18q0-5 4-7Z" fill="url(#trade)" />
          <path d="M12 23h23l-8-7M36 30H13l8 7" fill="none" stroke="#fff" strokeWidth="3.500" />
        </svg>
        交易
      </button>
      <button className="flex flex-1 flex-col items-center gap-0.5 pt-2">
        <svg viewBox="0 0 48 52" className="h-[52px] w-12" fill="none" stroke="#2f2f2f" strokeWidth="3.500" aria-hidden="true">
          <path d="M24 2c2 0 3 1 4 3 9 2 13 8 13 17v11l4 6q1 4-4 4H7q-5 0-4-4l4-6V22c0-9 4-15 13-17 1-2 2-3 4-3Z" strokeLinejoin="round" />
          <path d="M18 46h12q-1 6-6 6t-6-6z" fill="#2f2f2f" stroke="none" />
        </svg>
        预警
      </button>
      <button className="flex flex-1 flex-col items-center gap-0.5 pt-2">
        <svg viewBox="0 0 52 52" className="size-[52px]" fill="none" stroke="#2f2f2f" strokeWidth="3.500" aria-hidden="true">
          <circle cx="26" cy="26" r="24" />
          <path d="M13 26h26" />
        </svg>
        删自选
      </button>
      <button className="flex flex-1 flex-col items-center gap-0.5 pt-2">
        <svg viewBox="0 0 52 52" className="size-[52px]" fill="none" stroke="#2f2f2f" strokeWidth="4" aria-hidden="true">
          <rect x="4" y="4" width="19" height="19" rx="3" />
          <rect x="29" y="4" width="19" height="19" rx="3" />
          <rect x="4" y="29" width="19" height="19" rx="3" />
          <rect x="29" y="29" width="19" height="19" rx="3" />
        </svg>
        更多
      </button>
    </nav>
  )
}

export default function App() {
  return (
    <div className="bg-white pb-4 font-[Roboto,'Noto_Sans_CJK_SC',sans-serif]">
      <Header />
      <Quote />
      <Notice />
      <PeriodTabs />
      <section className="relative grid grid-cols-[minmax(0,1fr)_355px]">
        <ChartColumn />
        <ChipColumn />
        {/* hand-drawn marker stroke round the chip panel */}
        <svg viewBox="0 625 1080 1405" preserveAspectRatio="none" className="pointer-events-none absolute inset-0 h-full w-full">
          <path
            d="M980 1096C940 1101 905 1105 873 1113C820 1127 785 1171 760 1221C735 1266 710 1312 695 1372C682 1430 676 1480 686 1540C694 1600 712 1655 753 1689C790 1712 850 1733 910 1733C960 1734 1000 1720 1030 1703L1090 1664"
            fill="none"
            stroke="#f43510"
            strokeWidth="20"
            strokeLinecap="round"
          />
        </svg>
      </section>
      <Toolbar />
      <div className="h-[15px] bg-[#f3f3f3]" />
      <SectionTabs />
      <BottomNav />
      <div className="mx-auto mt-[78px] h-[11px] w-[418px] rounded-full bg-[#444]" />
    </div>
  )
}
